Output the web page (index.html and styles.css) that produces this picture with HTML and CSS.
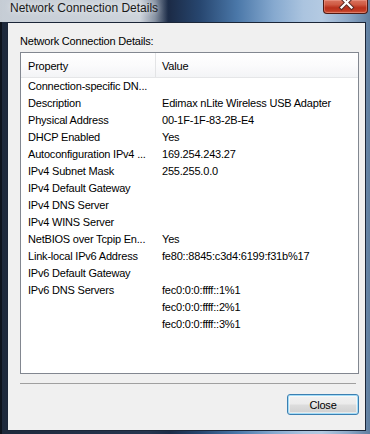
FILE: index.html
```html
<!DOCTYPE html>
<html>
<head>
<meta charset="utf-8">
<title>Network Connection Details</title>
<link rel="stylesheet" href="styles.css">
</head>
<body>
<div class="window">
  <div class="titlebar">
    <span class="title">Network Connection Details</span>
    <div class="close-btn">
      <svg width="45" height="14" viewBox="0 0 45 14">
        <path d="M18.5 -2.5 L28.5 7.5 M28.5 -2.5 L18.5 7.5" stroke="#5a2a24" stroke-width="4.2" stroke-linecap="square" fill="none"/>
        <path d="M18.5 -2.5 L28.5 7.5 M28.5 -2.5 L18.5 7.5" stroke="#ffffff" stroke-width="2.2" stroke-linecap="square" fill="none"/>
      </svg>
    </div>
  </div>
  <div class="client">
    <div class="label">Network Connection Details:</div>
    <div class="list">
      <div class="list-head">
        <div class="hcell prop">Property</div>
        <div class="hcell val">Value</div>
      </div>
      <div class="row"><div class="prop">Connection-specific DN...</div><div class="val"></div></div>
      <div class="row"><div class="prop">Description</div><div class="val">Edimax nLite Wireless USB Adapter</div></div>
      <div class="row"><div class="prop">Physical Address</div><div class="val">00-1F-1F-83-2B-E4</div></div>
      <div class="row"><div class="prop">DHCP Enabled</div><div class="val">Yes</div></div>
      <div class="row"><div class="prop">Autoconfiguration IPv4 ...</div><div class="val">169.254.243.27</div></div>
      <div class="row"><div class="prop">IPv4 Subnet Mask</div><div class="val">255.255.0.0</div></div>
      <div class="row"><div class="prop">IPv4 Default Gateway</div><div class="val"></div></div>
      <div class="row"><div class="prop">IPv4 DNS Server</div><div class="val"></div></div>
      <div class="row"><div class="prop">IPv4 WINS Server</div><div class="val"></div></div>
      <div class="row"><div class="prop">NetBIOS over Tcpip En...</div><div class="val">Yes</div></div>
      <div class="row"><div class="prop">Link-local IPv6 Address</div><div class="val">fe80::8845:c3d4:6199:f31b%17</div></div>
      <div class="row"><div class="prop">IPv6 Default Gateway</div><div class="val"></div></div>
      <div class="row"><div class="prop">IPv6 DNS Servers</div><div class="val">fec0:0:0:ffff::1%1</div></div>
      <div class="row"><div class="prop"></div><div class="val">fec0:0:0:ffff::2%1</div></div>
      <div class="row"><div class="prop"></div><div class="val">fec0:0:0:ffff::3%1</div></div>
    </div>
    <div class="separator"></div>
    <div class="actions">
      <button class="btn">Close</button>
    </div>
  </div>
</div>
</body>
</html>
```

FILE: styles.css
```css
html, body {
  margin: 0;
  padding: 0;
  width: 370px;
  height: 434px;
  overflow: hidden;
}

.window {
  box-sizing: border-box;
  width: 370px;
  height: 434px;
  display: flex;
  flex-direction: column;
  padding: 0 4px 3px 7px;
  background:
    linear-gradient(to right, #0d131c 0, #0d131c 2px, rgba(0,0,0,0) 2px),
    linear-gradient(to right, #1d293b 0%, #223046 20%, #263650 40%, #1c2c48 46%, #27466f 54%, #4a77a8 64%, #86a9cf 74%, #abc4df 82%, #b4cae2 87%, #8ea9c8 94%, #5f7e9f 100%);
  font-family: "Liberation Sans", Arial, sans-serif;
}

.titlebar {
  height: 22px;
  margin: 0 -4px 0 -7px;
  padding: 0 2px 0 10px;
  display: flex;
  align-items: flex-start;
  background:
    linear-gradient(to right, rgba(205,212,220,0.96) 0, rgba(212,218,225,0.96) 140px, rgba(200,208,218,0.6) 155px, rgba(200,208,218,0) 168px);
}

.title {
  font-size: 12px;
  line-height: 15px;
  padding-top: 1px;
  color: #1a1a1a;
  text-shadow: 0 0 6px rgba(255,255,255,0.9);
}

.close-btn {
  margin-left: auto;
  box-sizing: border-box;
  width: 45px;
  height: 14px;
  border: 1px solid #4f1a13;
  border-top: none;
  border-radius: 0 0 4px 4px;
  background: linear-gradient(to bottom, #d9735f 0%, #cf5a43 35%, #b9301b 60%, #c13c24 85%, #d2624a 100%);
  box-shadow: inset 0 0 0 1px rgba(255,190,175,0.35);
  overflow: hidden;
}

.close-btn svg {
  display: block;
  margin: 0 -1px;
}

.client {
  flex: 1;
  box-sizing: border-box;
  border: 1px solid #1b2638;
  background: #f0f0f0;
  padding: 12px 6px 0 12px;
  display: flex;
  flex-direction: column;
  font-size: 11px;
  letter-spacing: -0.2px;
  color: #000;
}

.label {
  line-height: 13px;
  height: 13px;
}

.list {
  margin-top: 4px;
  box-sizing: border-box;
  height: 322px;
  border: 1px solid #828790;
  background: #fff;
}

.list-head {
  display: grid;
  grid-template-columns: 135px 1fr;
  background: linear-gradient(to bottom, #ffffff 0%, #fbfbfc 50%, #f3f4f6 100%);
  border-bottom: 1px solid #e5e6e8;
}

.hcell {
  line-height: 13px;
  padding: 7px 0 4px 0;
}

.hcell.prop {
  box-sizing: border-box;
  padding-left: 7px;
  border-right: 1px solid #e3e4e6;
}

.hcell.val {
  padding-left: 6px;
}

.row {
  display: grid;
  grid-template-columns: 135px 1fr;
  height: 17px;
  line-height: 17px;
}

.row .prop {
  padding-left: 7px;
  white-space: nowrap;
  overflow: hidden;
}

.row .val {
  padding-left: 6px;
  white-space: nowrap;
}

.separator {
  margin: 9px 3px 0 0;
  height: 1px;
  background: #a0a0a0;
}

.actions {
  margin-top: 10px;
  display: flex;
  justify-content: flex-end;
}

.btn {
  box-sizing: border-box;
  width: 72px;
  height: 21px;
  margin: 0;
  padding: 0;
  font-family: "Liberation Sans", Arial, sans-serif;
  font-size: 11px;
  letter-spacing: -0.2px;
  color: #000;
  border: 1px solid #3c7fb1;
  border-radius: 3px;
  background: linear-gradient(to bottom, #f2f2f2 0%, #ebebeb 48%, #dddddd 52%, #cfcfcf 100%);
  box-shadow: inset 0 0 0 1px #a3dcf7, inset 0 0 0 2px rgba(255,255,255,0.5);
}
```
